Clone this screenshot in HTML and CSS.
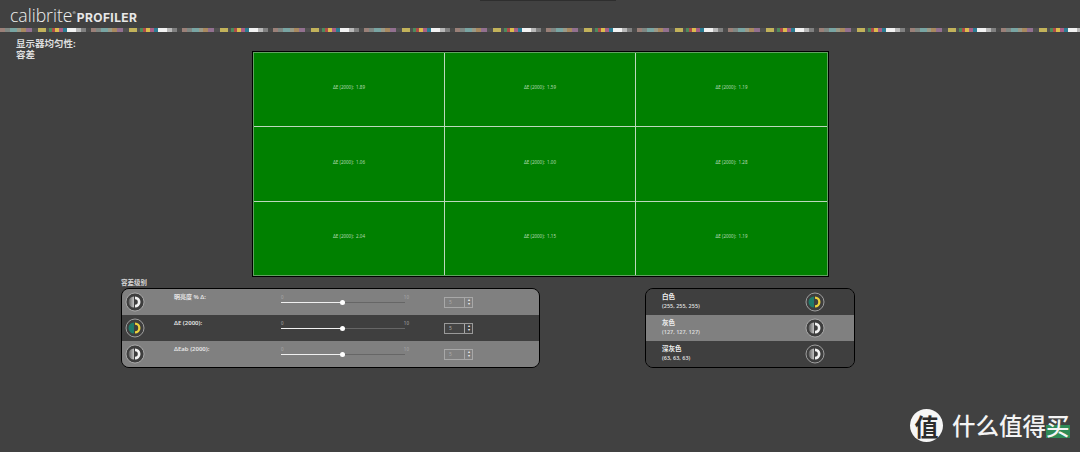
FILE: index.html
```html
<!DOCTYPE html>
<html>
	<head>
		<meta charset="utf-8">
		<title>calibrite PROFILER</title>
		<link rel="stylesheet" href="styles.css">
	</head>
	<body>
		<svg class="defs" width="0" height="0">
			<defs>
				<linearGradient id="half" x1="0" x2="1" y1="0" y2="0">
					<stop offset="0" stop-color="#5a5a5a"/>
					<stop offset="1" stop-color="#c4c4c4"/>
				</linearGradient>
				<symbol id="ico-off" viewBox="0 0 20 20">
					<circle cx="10" cy="10" r="9" fill="#3e3e3e" stroke="#b8b8b8" stroke-width="0.8"/>
					<path d="M9 4.5 A5.5 5.5 0 0 0 9 15.5 Z" fill="url(#half)"/>
					<path d="M10 4.5 A5.5 5.5 0 0 1 10 15.5 L10 12.8 A2.8 2.8 0 0 0 10 7.2 Z" fill="#f2f2f2"/>
				</symbol>
				<symbol id="ico-on" viewBox="0 0 20 20">
					<circle cx="10" cy="10" r="9" fill="#3e3e3e" stroke="#b8b8b8" stroke-width="0.8"/>
					<path d="M9 4.5 A5.5 5.5 0 0 0 9 15.5 Z" fill="#1f7a6a"/>
					<path d="M10 4.5 A5.5 5.5 0 0 1 10 15.5 L10 13.2 A3.2 3.2 0 0 0 10 6.8 Z" fill="#ecd23c"/>
				</symbol>
			</defs>
		</svg>

		<div class="topnotch"></div>
		<div class="logo">
			<span class="logo-name">calibrite</span><span class="logo-reg">®</span>
			<span class="logo-sub">PROFILER</span>
		</div>
		<div class="strip"></div>

		<div class="title">显示器均匀性:<br>容差</div>

		<div class="grid">
			<div class="cell">ΔE (2000):&nbsp; 1.89</div>
			<div class="cell">ΔE (2000):&nbsp; 1.59</div>
			<div class="cell">ΔE (2000):&nbsp; 1.19</div>
			<div class="cell">ΔE (2000):&nbsp; 1.06</div>
			<div class="cell">ΔE (2000):&nbsp; 1.00</div>
			<div class="cell">ΔE (2000):&nbsp; 1.28</div>
			<div class="cell">ΔE (2000):&nbsp; 2.04</div>
			<div class="cell">ΔE (2000):&nbsp; 1.15</div>
			<div class="cell">ΔE (2000):&nbsp; 1.19</div>
		</div>

		<div class="bottom">
			<div class="levels">
				<div class="levels-title">容差级别</div>
				<div class="panel panel-left">
					<div class="row row-light">
						<svg class="ico"><use href="#ico-off"/></svg>
						<div class="row-label">明亮度 % Δ:</div>
						<div class="slider">
							<div class="scale"><span>0</span><span>10</span></div>
							<div class="track"><div class="fill"></div><div class="knob"></div></div>
						</div>
						<div class="spin"><span class="spin-val">5</span><span class="spin-btns"><i>▴</i><i>▾</i></span></div>
					</div>
					<div class="row row-dark">
						<svg class="ico"><use href="#ico-on"/></svg>
						<div class="row-label">ΔE (2000):</div>
						<div class="slider">
							<div class="scale"><span>0</span><span>10</span></div>
							<div class="track"><div class="fill"></div><div class="knob"></div></div>
						</div>
						<div class="spin"><span class="spin-val">5</span><span class="spin-btns"><i>▴</i><i>▾</i></span></div>
					</div>
					<div class="row row-light">
						<svg class="ico"><use href="#ico-off"/></svg>
						<div class="row-label">ΔEab (2000):</div>
						<div class="slider">
							<div class="scale"><span>0</span><span>10</span></div>
							<div class="track"><div class="fill"></div><div class="knob"></div></div>
						</div>
						<div class="spin"><span class="spin-val">5</span><span class="spin-btns"><i>▴</i><i>▾</i></span></div>
					</div>
				</div>
			</div>

			<div class="panel panel-right">
				<div class="row row-dark">
					<div class="swatch"><b>白色</b><span>(255, 255, 255)</span></div>
					<svg class="ico"><use href="#ico-on"/></svg>
				</div>
				<div class="row row-light">
					<div class="swatch"><b>灰色</b><span>(127, 127, 127)</span></div>
					<svg class="ico"><use href="#ico-off"/></svg>
				</div>
				<div class="row row-dark">
					<div class="swatch"><b>深灰色</b><span>(63, 63, 63)</span></div>
					<svg class="ico"><use href="#ico-off"/></svg>
				</div>
			</div>
		</div>

		<div class="mark">
			<div class="mark-badge">值</div>
			<div class="mark-text">什么值得<span class="mark-last">买</span></div>
		</div>
	</body>
</html>
```

FILE: styles.css
```css
html, body {
	margin: 0;
	height: 452px;
	overflow: hidden;
}
body {
	position: relative;
	background-color: #414141;
	font-family: "Noto Sans", "Noto Sans CJK SC", sans-serif;
	color: #eee;
}
.defs {
	position: absolute;
}
.topnotch {
	position: absolute;
	left: 480px;
	top: 0;
	width: 136px;
	height: 1px;
	background-color: #2e2e2e;
}

/* header */
.logo {
	height: 28px;
	padding-left: 10px;
	display: flex;
	align-items: baseline;
	line-height: 30px;
	white-space: nowrap;
}
.logo-name {
	font-family: "Open Sans", sans-serif;
	font-weight: 300;
	font-size: 17.6px;
	color: #f0f0f0;
}
.logo-reg {
	font-size: 4px;
	position: relative;
	top: -8px;
}
.logo-sub {
	font-family: Inter, sans-serif;
	font-weight: 700;
	font-size: 12px;
	letter-spacing: 0.4px;
	margin-left: 1px;
	color: #e8e8e8;
}
.strip {
	height: 4px;
	filter: blur(0.4px);
	background-size: 91px 4px;
	background-repeat: repeat-x;
	background-image: linear-gradient(to right,
		#9a8078 0, #9a8078 5px,
		#7f8783 5px, #7f8783 10px,
		#78a5a3 10px, #78a5a3 17px,
		#9a9a88 17px, #9a9a88 21px,
		#a8895f 21px, #a8895f 26px,
		#92708f 26px, #92708f 32px,
		#505050 32px, #505050 38px,
		#c2b25a 38px, #c2b25a 46px,
		#505050 46px, #505050 49px,
		#4c8a5c 49px, #4c8a5c 52px,
		#b04c48 52px, #b04c48 55px,
		#dcbc4c 55px, #dcbc4c 59px,
		#a85f84 59px, #a85f84 63px,
		#2a7c92 63px, #2a7c92 67px,
		#f2f2f2 67px, #f2f2f2 76px,
		#b8b8b8 76px, #b8b8b8 81px,
		#808080 81px, #808080 86px,
		#4a4a4a 86px, #4a4a4a 91px);
}
.title {
	height: 13px;
	padding: 6px 0 0 16px;
	font-size: 9.5px;
	line-height: 11px;
	font-weight: 700;
	color: #dedede;
}

/* tolerance grid */
.grid {
	box-sizing: border-box;
	width: 577px;
	height: 226px;
	margin-left: 252px;
	border: 1px solid #000;
	padding: 1px;
	background-color: #5fa35f;
	display: grid;
	grid-template-columns: 191px 191px 1fr;
	grid-template-rows: 74px 75px 1fr;
}
.cell {
	background-color: #008000;
	font-size: 4.5px;
	color: #b5d8b5;
	display: flex;
	align-items: center;
	justify-content: center;
	padding-bottom: 5px;
	border-right: 1px solid #bcd8bc;
	border-bottom: 1px solid #bcd8bc;
}
.cell:nth-child(3n) {
	border-right: 0;
}
.cell:nth-child(n+7) {
	border-bottom: 0;
}

/* bottom panels */
.bottom {
	display: flex;
	align-items: flex-end;
	padding-left: 121px;
	margin-top: 2px;
}
.levels {
	width: 419px;
	margin-right: 105px;
}
.levels-title {
	font-size: 6.5px;
	line-height: 7px;
	margin-bottom: 2px;
	font-weight: 700;
	color: #d4d4d4;
}
.panel {
	box-sizing: border-box;
	height: 80px;
	border: 1px solid #000;
	border-radius: 8px;
	overflow: hidden;
	display: flex;
	flex-direction: column;
}
.panel-left {
	width: 419px;
}
.panel-right {
	width: 210px;
}
.row {
	flex: 1;
	display: flex;
	align-items: center;
	position: relative;
}
.row-light {
	background-color: #808080;
}
.row-dark {
	background-color: #3f3f3f;
}
.ico {
	width: 20px;
	height: 20px;
	flex: none;
}
.panel-left .ico {
	margin-left: 3px;
}
.panel-right .ico {
	margin-left: auto;
	margin-right: 29px;
}
.row-label {
	width: 107px;
	margin-left: 29px;
	align-self: flex-start;
	padding-top: 4px;
	font-size: 6px;
	line-height: 9px;
	font-weight: 600;
	color: #e6e6e6;
}
.slider {
	width: 124px;
	margin-top: -5px;
}
.scale {
	display: flex;
	justify-content: space-between;
	font-size: 4.5px;
	line-height: 6px;
	color: #aaa;
	margin-right: -4px;
	margin-bottom: 2px;
}
.track {
	position: relative;
	height: 1px;
	background-color: #666;
	margin-bottom: 2px;
}
.fill {
	width: 50%;
	height: 1px;
	background-color: #f0f0f0;
}
.knob {
	position: absolute;
	left: 59px;
	top: -2px;
	width: 5px;
	height: 5px;
	border-radius: 50%;
	background-color: #fff;
}
.spin {
	box-sizing: border-box;
	width: 29px;
	height: 11px;
	margin-left: 39px;
	border: 1px solid #a8a8a8;
	display: flex;
	font-size: 5px;
	color: #aaa;
	line-height: 9px;
}
.row-dark .spin {
	border-color: #999;
	background-color: #444;
}
.spin-val {
	flex: 1;
	padding-left: 4px;
}
.spin-btns {
	width: 7px;
	border-left: 1px solid #a8a8a8;
	display: flex;
	flex-direction: column;
}
.spin-btns i {
	flex: 1;
	font-style: normal;
	font-size: 4px;
	line-height: 4.5px;
	text-align: center;
	color: #eee;
}
.swatch {
	margin-left: 16px;
	margin-top: -2px;
	display: flex;
	flex-direction: column;
	font-size: 5.5px;
	font-weight: 600;
	line-height: 9px;
	color: #ddd;
}
.swatch b {
	font-weight: 700;
	font-size: 6.5px;
	line-height: 11px;
	color: #eee;
}

/* watermark */
.mark {
	position: absolute;
	left: 910px;
	top: 409px;
	display: flex;
	align-items: center;
}
.mark-badge {
	width: 33px;
	height: 33px;
	border-radius: 50%;
	background-color: #f6f6f6;
	color: #2c2c2c;
	font-family: "Noto Sans CJK SC", sans-serif;
	font-weight: 700;
	font-size: 24px;
	line-height: 33px;
	text-align: center;
}
.mark-text {
	margin-left: 9px;
	font-family: "Noto Sans CJK SC", sans-serif;
	font-weight: 500;
	font-size: 23.5px;
	line-height: 33px;
	color: #f4f4f4;
	white-space: nowrap;
}
.mark-last {
	background: linear-gradient(to bottom, transparent 50%, #2f8a56 50%, #2f8a56 88%, transparent 88%);
}
```
